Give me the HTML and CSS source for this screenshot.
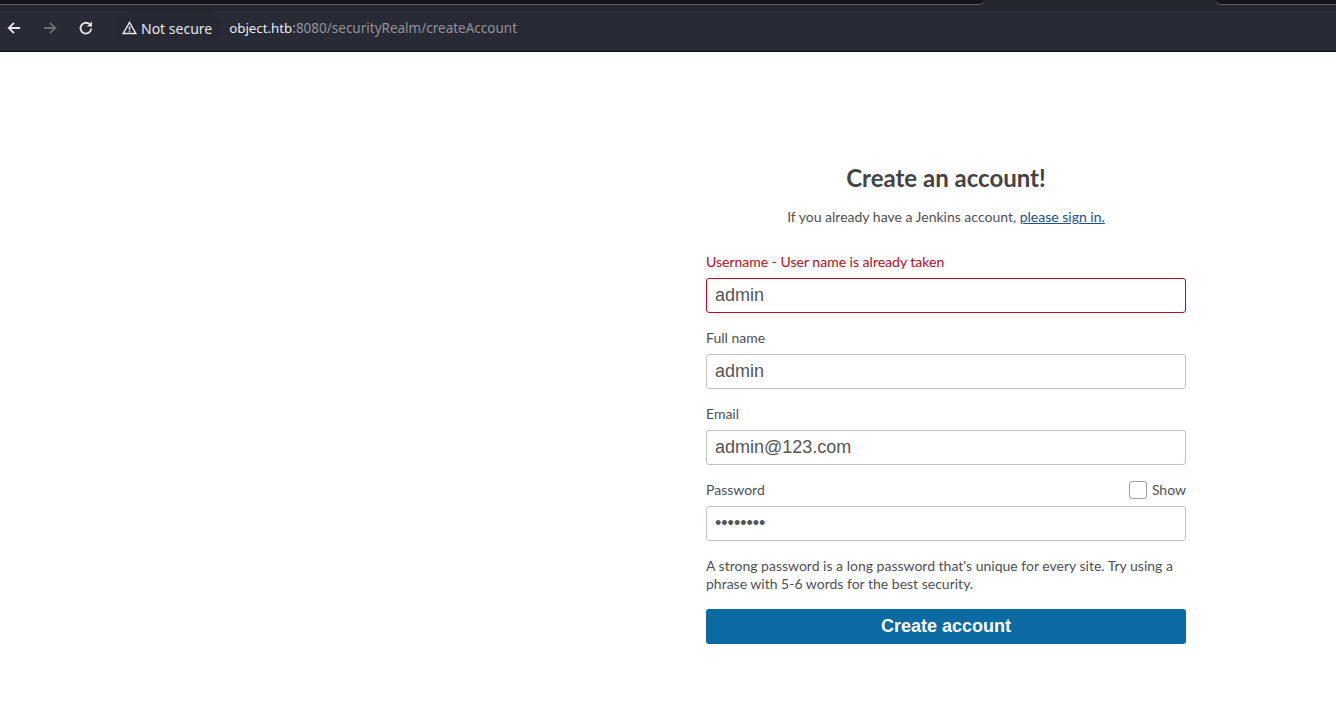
FILE: index.html
```html
<!DOCTYPE html>
<html lang="en">
<head>
    <meta charset="UTF-8">
    <title>Create an account</title>
    <link rel="stylesheet" href="styles.css">
</head>
<body>
<div class="browser">
    <div class="tabStrip">
        <div class="tabGap tabGapLeft"></div>
        <div class="tabActive"></div>
        <div class="tabGap tabGapRight"></div>
    </div>
    <div class="toolbar">
        <svg class="navIcon" width="16" height="16" viewBox="0 0 16 16">
            <path d="M14 8H3M8 2.8L2.8 8 8 13.2" fill="none" stroke="#e6e7ea" stroke-width="1.8"/>
        </svg>
        <svg class="navIcon" width="16" height="16" viewBox="0 0 16 16">
            <path d="M2 8h11M8 2.8L13.2 8 8 13.2" fill="none" stroke="#6d6f76" stroke-width="1.8"/>
        </svg>
        <svg class="navIcon" width="16" height="16" viewBox="0 0 16 16">
            <path d="M13.3 8.5A5.4 5.4 0 1 1 11.6 4.2" fill="none" stroke="#e6e7ea" stroke-width="1.8"/>
            <path d="M14 1.6v5H9z" fill="#e6e7ea"/>
        </svg>
        <div class="secureChip">
            <svg width="15" height="14" viewBox="0 0 15 14">
                <path d="M7.5 1.5L1.2 12.5h12.6zM7.5 5.5v3.8M7.5 10v1.3" fill="none" stroke="#e6e7ea" stroke-width="1.5"/>
            </svg>
            <span>Not secure</span>
        </div>
        <div class="url"><span class="urlHost">object.htb</span>:8080/securityRealm/createAccount</div>
    </div>
</div>

<div class="page">
    <form class="signup">
        <h1>Create an account!</h1>
        <p class="signin">If you already have a Jenkins account, <a href="#">please sign in.</a></p>

        <div class="field fieldError">
            <label class="fieldLabel" for="username">Username - User name is already taken</label>
            <input class="formInput" type="text" id="username" value="admin">
        </div>
        <div class="field">
            <label class="fieldLabel" for="fullname">Full name</label>
            <input class="formInput" type="text" id="fullname" value="admin">
        </div>
        <div class="field">
            <label class="fieldLabel" for="email">Email</label>
            <input class="formInput" type="text" id="email" value="admin@123.com">
        </div>
        <div class="field">
            <div class="labelRow">
                <label class="fieldLabel" for="password">Password</label>
                <label class="showToggle"><span class="checkBox"></span>Show</label>
            </div>
            <input class="formInput" type="password" id="password" value="admin123">
        </div>

        <p class="hint">A strong password is a long password that's unique for every site. Try using a phrase with 5-6 words for the best security.</p>
        <button class="submit" type="button">Create account</button>
    </form>
</div>
</body>
</html>
```

FILE: styles.css
```css
html, body {
    margin: 0;
    height: 100%;
    overflow: hidden;
    background: #fff;
}

.browser {
    height: 52px;
    background: #282a35;
    border-bottom: 1px solid #0c0d10;
    box-sizing: border-box;
}

.tabStrip {
    display: flex;
    height: 11px;
    background: #242630;
}
.tabGap {
    height: 5px;
    box-sizing: border-box;
    background: #14151c;
    border-bottom: 1px solid #5d5f66;
}
.tabGapLeft {
    width: 984px;
    border-bottom-right-radius: 8px;
}
.tabGapRight {
    flex: 1;
    border-bottom-left-radius: 8px;
}
.tabActive {
    width: 232px;
}

.toolbar {
    display: flex;
    align-items: center;
    height: 34px;
    font-family: "Noto Sans", sans-serif;
}
.navIcon {
    margin-left: 6px;
    margin-right: 14px;
}
.secureChip {
    display: flex;
    align-items: center;
    flex: none;
    gap: 4px;
    height: 30px;
    margin-left: 6px;
    padding: 0 8px;
    background: #262833;
    border-radius: 15px;
    color: #e6e7ea;
    font-size: 14px;
}
.url {
    margin-left: 9px;
    color: #91939a;
    font-size: 13.5px;
}
.urlHost {
    color: #eceded;
    font-size: 13.3px;
}

.page {
    display: flex;
    justify-content: flex-end;
    padding-right: 150px;
    font-family: Lato, sans-serif;
    color: #505054;
}
.signup {
    width: 480px;
    padding-top: 110px;
}

h1 {
    margin: 0;
    text-align: center;
    font-size: 24px;
    font-weight: 700;
    line-height: 32px;
    color: #444;
}
.signin {
    margin: 13px 0 0;
    text-align: center;
    font-size: 14px;
    line-height: 20px;
}
.signin a {
    color: #20508a;
}

.field {
    margin-bottom: 15px;
}
.field:last-of-type {
    margin-bottom: 16px;
}
.signin + .field {
    margin-top: 25px;
}
.fieldLabel {
    display: block;
    font-size: 14px;
    line-height: 20px;
}
.labelRow {
    display: flex;
    justify-content: space-between;
    align-items: center;
    height: 20px;
}
.fieldError .fieldLabel {
    color: #b40d24;
}
.fieldError .formInput {
    border-color: #b40d24;
}
.formInput {
    display: block;
    width: 100%;
    height: 35px;
    margin-top: 6px;
    padding: 0 8px;
    box-sizing: border-box;
    border: 1px solid #c0c0c0;
    border-radius: 3px;
    font-family: "Liberation Sans", Arial, sans-serif;
    font-size: 18px;
    color: #555;
}

.showToggle {
    display: flex;
    align-items: center;
    gap: 5px;
    font-size: 14px;
    line-height: 20px;
}
.checkBox {
    width: 16px;
    height: 16px;
    border: 1px solid #a0a0a0;
    border-radius: 3px;
}

.hint {
    margin: 0;
    font-size: 14px;
    line-height: 18px;
}
.submit {
    display: block;
    width: 100%;
    height: 35px;
    margin-top: 16px;
    border: 0;
    border-radius: 3px;
    background: #0b6aa2;
    color: #fff;
    font-family: "Liberation Sans", Arial, sans-serif;
    font-size: 18px;
    font-weight: 700;
}
```
